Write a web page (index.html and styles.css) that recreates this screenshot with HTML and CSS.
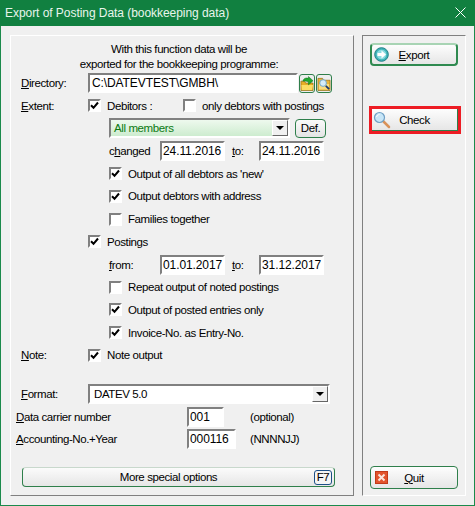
FILE: index.html
```html
<!DOCTYPE html>
<html lang="en">
<head>
<meta charset="utf-8">
<title>Export of Posting Data</title>
<link rel="stylesheet" href="styles.css">
</head>
<body>
<div class="window">
  <header class="titlebar">
    <span class="title">Export of Posting Data (bookkeeping data)</span>
    <svg class="close" width="11" height="11" viewBox="0 0 11 11"><path d="M.5.5l10 10M10.500.5l-10 10" stroke="#fff" fill="none"/></svg>
  </header>
  <div class="client">
    <main class="panel main-panel">
      <p class="intro">With this function data will be<br>exported for the bookkeeping programme:</p>
      <div class="rows">
        <div class="row">
          <label class="lbl"><u>D</u>irectory:</label>
          <span class="field dir">C:\DATEVTEST\GMBH\</span>
          <button class="iconbtn">
            <svg width="15" height="17" viewBox="0 0 15 17"><path d="M1 6h4l1 2h8v8H1z" fill="#e8ac24" stroke="#8a6a10" stroke-width=".7"/><path d="M1.500 10h12.500l-1 5.500H2z" fill="#fbdc62"/><path d="M3 6c1-3 3-4 6-3V1l5 4.500L9 10V6.500C7 6 5 5.800 3 6z" fill="#22a92f" stroke="#0c6b1a" stroke-width=".5"/></svg>
          </button>
          <button class="iconbtn">
            <svg width="15" height="17" viewBox="0 0 15 17"><path d="M1 3h5l1 2h7v11H1z" fill="#e9b63a" stroke="#8a6a10" stroke-width=".7"/><path d="M2 9h11v6H2z" fill="#f8dc80"/><circle cx="6.500" cy="8" r="3.600" fill="#d5edfa" stroke="#6aa3c8"/><path d="M9.500 11l3.500 3.500" stroke="#1b3a6b" stroke-width="2"/></svg>
          </button>
        </div>
        <div class="row">
          <label class="lbl"><u>E</u>xtent:</label>
          <span class="chk on"></span><span class="chk-text debtors">Debitors :</span>
          <span class="chk"></span><span class="chk-text">only debtors with postings</span>
        </div>
        <div class="row sub">
          <div class="combo members"><span class="combo-text">All members</span><span class="arrow"></span></div>
          <button class="def">Def.</button>
        </div>
        <div class="row sub">
          <label class="sub-lbl">c<u>h</u>anged</label>
          <span class="field date">24.11.2016</span>
          <label class="to"><u>t</u>o:</label>
          <span class="field date">24.11.2016</span>
        </div>
        <div class="row sub"><span class="chk on"></span><span class="chk-text">Output of all debtors as 'new'</span></div>
        <div class="row sub"><span class="chk on"></span><span class="chk-text">Output debtors with address</span></div>
        <div class="row sub"><span class="chk"></span><span class="chk-text">Families together</span></div>
        <div class="row indent"><span class="chk on"></span><span class="chk-text">Postings</span></div>
        <div class="row sub">
          <label class="sub-lbl"><u>f</u>rom:</label>
          <span class="field date">01.01.2017</span>
          <label class="to"><u>t</u>o:</label>
          <span class="field date">31.12.2017</span>
        </div>
        <div class="row sub"><span class="chk"></span><span class="chk-text">Repeat output of noted postings</span></div>
        <div class="row sub"><span class="chk on"></span><span class="chk-text">Output of posted entries only</span></div>
        <div class="row sub"><span class="chk on"></span><span class="chk-text">Invoice-No. as Entry-No.</span></div>
        <div class="row">
          <label class="lbl"><u>N</u>ote:</label>
          <span class="chk on"></span><span class="chk-text">Note output</span>
        </div>
      </div>
      <div class="lower">
        <div class="row">
          <label class="lbl"><u>F</u>ormat:</label>
          <div class="combo format"><span class="combo-text">DATEV 5.0</span><span class="arrow"></span></div>
        </div>
        <div class="row tight">
          <label class="lbl-wide"><u>D</u>ata carrier number</label>
          <span class="field num short">001</span>
          <span class="hint">(optional)</span>
        </div>
        <div class="row tight">
          <label class="lbl-wide"><u>A</u>ccounting-No.+Year</label>
          <span class="field num long">000116</span>
          <span class="hint">(NNNNJJ)</span>
        </div>
      </div>
      <button class="more">
        <span class="more-text">More special options</span>
        <span class="key">F7</span>
      </button>
    </main>
    <aside class="panel side-panel">
      <button class="action export">
        <svg width="15" height="15" viewBox="0 0 15 15"><circle cx="7.500" cy="7.500" r="6.800" fill="#3fb4b8" stroke="#1f7f87"/><circle cx="7.500" cy="7.500" r="4.800" fill="#8adbe0"/><path d="M3.500 6h4V3.500l4.500 4-4.500 4V9h-4z" fill="#fff"/></svg>
        <span class="action-text"><u>E</u>xport</span>
      </button>
      <div class="check-wrap">
        <button class="action check">
          <svg width="18" height="18" viewBox="0 0 18 18"><path d="M10 10l6 6" stroke="#d9925a" stroke-width="2.500" stroke-linecap="round"/><circle cx="6.500" cy="6.500" r="5" fill="#c7e6f8" stroke="#6f9fc4" stroke-width="1.200"/><path d="M3.500 6c.5-1.500 1.500-2.300 3-2.500" stroke="#fff" fill="none"/></svg>
          <span class="action-text">Check</span>
        </button>
      </div>
      <button class="action quit">
        <svg width="13" height="13" viewBox="0 0 13 13"><rect x=".5" y=".5" width="12" height="12" fill="#e2542c" stroke="#c23a18"/><path d="M3.500 3.500l6 6M9.500 3.500l-6 6" stroke="#fbe6dc" stroke-width="2"/></svg>
        <span class="action-text"><u>Q</u>uit</span>
      </button>
    </aside>
  </div>
</div>
</body>
</html>
```
FILE: styles.css
```css
* { box-sizing: border-box; }
html, body { margin: 0; padding: 0; }
body {
  width: 475px;
  height: 506px;
  overflow: hidden;
  font-family: "Liberation Sans", Arial, sans-serif;
  font-size: 11.500px;
  letter-spacing: -0.400px;
  color: #000;
}
u { text-underline-offset: 1px; }
.window {
  width: 475px;
  height: 506px;
  display: flex;
  flex-direction: column;
  background: #f0f0f0;
  border: 1px solid #1b8a4b;
  border-top: 0;
}
.titlebar {
  height: 26px;
  flex: none;
  margin: 0 -1px;
  background: #118040;
  color: #e8f5ec;
  display: flex;
  align-items: center;
  justify-content: space-between;
  padding: 0 8px 1px 5px;
  font-size: 12px;
  letter-spacing: -0.050px;
}
.close { display: block; margin-right: 1px; }
.client {
  flex: 1;
  display: flex;
  gap: 8px;
  padding: 9px 8px 9px 9px;
}
.panel {
  border: 1px solid #fff;
  border-right-color: #808080;
  border-bottom-color: #808080;
}
.main-panel {
  width: 344px;
  padding: 6px 0 0 10px;
  display: flex;
  flex-direction: column;
}
.side-panel {
  width: 104px;
  border-color: #808080 #fff #fff #808080;
  padding: 7px 0 6px 7px;
  display: flex;
  flex-direction: column;
}
.intro {
  margin: 0;
  width: 316px;
  text-align: center;
  line-height: 15px;
}
.rows {
  margin-top: 1px;
  display: flex;
  flex-direction: column;
  gap: 2.700px;
}
.row {
  height: 20px;
  display: flex;
  align-items: center;
}
.sub { padding-left: 88px; }
.indent { padding-left: 67px; }
.lbl { width: 67px; flex: none; }
.sub-lbl { width: 51px; flex: none; }
.to { width: 34px; flex: none; padding-left: 7px; }
.field {
  display: block;
  height: 20px;
  background: #fff;
  border: 2px solid;
  border-color: #808080 #fff #fff #808080;
  line-height: 16px;
  padding-left: 1px;
  white-space: nowrap;
  font-size: 12px;
  letter-spacing: -0.100px;
}
.dir { width: 210px; margin-right: 1px; padding-left: 2px; }
.date { width: 65px; }
.iconbtn {
  width: 16px;
  height: 19px;
  padding: 0;
  margin-right: 1px;
  background: #eee;
  border: 1px solid #2f7f4b;
  border-radius: 3px;
  display: flex;
  align-items: center;
  justify-content: center;
  overflow: hidden;
}
.chk {
  width: 13px;
  height: 13px;
  flex: none;
  display: block;
  background-color: #fff;
  border: 2px solid;
  border-color: #808080 #fff #fff #808080;
}
.chk.on {
  background-image: url("data:image/svg+xml,%3Csvg xmlns='http://www.w3.org/2000/svg' width='9' height='9' viewBox='0 0 9 9'%3E%3Cpath d='M1 4.300l2.500 2.500L8 1.500' fill='none' stroke='%23000' stroke-width='2'/%3E%3C/svg%3E");
  background-position: center;
  background-repeat: no-repeat;
}
.chk-text { padding-left: 6px; white-space: nowrap; }
.debtors { width: 82px; flex: none; }
.combo {
  height: 20px;
  display: flex;
  align-items: center;
  justify-content: space-between;
  border: 2px solid;
  border-color: #808080 #fff #fff #808080;
  background: #fff;
}
.members {
  width: 181px;
  color: #0b7a12;
  background: linear-gradient(180deg, #eef9ee, #cdeccf);
}
.combo-text { padding-left: 3px; }
.format { width: 242px; }
.format .combo-text { padding-left: 4px; }
.arrow {
  width: 16px;
  height: 16px;
  flex: none;
  background: #f0f0f0;
  border: 1px solid;
  border-color: #fff #666 #666 #fff;
  position: relative;
}
.arrow::after {
  content: "";
  position: absolute;
  left: 3px;
  top: 5px;
  border: 4px solid transparent;
  border-top: 4px solid #000;
  border-bottom: 0;
}
.def {
  width: 31px;
  height: 19px;
  margin-left: 5px;
  padding: 0;
  font: inherit;
  letter-spacing: inherit;
  color: #000;
  background: linear-gradient(#fafafa, #e4e4e4);
  border: 1px solid #2f7f4b;
  border-radius: 4px;
}
.lower {
  margin-top: 19px;
  margin-left: -5px;
  display: flex;
  flex-direction: column;
}
.lower .row:first-child { padding-left: 5px; }
.tight { margin-top: 3px; }
.tight + .tight { margin-top: 2px; }
.lbl-wide { width: 171px; flex: none; }
.short { width: 37px; margin-right: 26px; }
.long { width: 49px; margin-right: 14px; }
.more {
  width: 313px;
  height: 20px;
  margin-top: 18px;
  margin-left: 1px;
  padding: 0;
  font: inherit;
  letter-spacing: inherit;
  color: #000;
  background: linear-gradient(#fbfbfb, #e6e6e6);
  border: 1px solid #2f7f4b;
  border-top-color: #c8d8cc;
  border-radius: 4px;
  display: flex;
  align-items: center;
  position: relative;
  justify-content: center;
}
.more-text { padding-right: 20px; }
.key {
  position: absolute;
  right: 2px;
  top: 2px;
  width: 18px;
  height: 15px;
  border: 1px solid #1d4f86;
  border-radius: 3px;
  background: #f4f4f4;
  line-height: 13px;
  text-align: center;
}
.action {
  width: 88px;
  height: 23px;
  flex: none;
  padding: 0 0 0 4px;
  font: inherit;
  letter-spacing: inherit;
  color: #000;
  background: linear-gradient(#fdfdfd, #e6e6e6);
  border: 1px solid #2f7f4b;
  border-radius: 4px;
  display: flex;
  align-items: center;
  position: relative;
}
.export {
  border-width: 2px;
  border-color: #a8d4b4 #2f8a50 #2f8a50 #2f8a50;
  padding-left: 2px;
}
.action-text {
  position: absolute;
  left: 0;
  right: 0;
  text-align: center;
  pointer-events: none;
}
.check-wrap {
  margin: 40px 0 0 -1px;
  width: 92px;
  height: 28px;
  border: 3px solid #ed1c24;
  flex: none;
}
.check {
  width: 86px;
  height: 22px;
  padding-left: 1px;
  border: 0;
  border-right: 1px solid #2f7f4b;
  border-bottom: 1px solid #2f7f4b;
  border-radius: 0;
}
.quit { margin-top: auto; }
```
